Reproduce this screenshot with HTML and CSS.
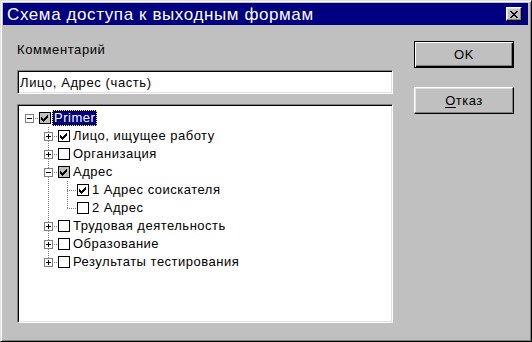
FILE: index.html
```html
<!DOCTYPE html>
<html lang="ru">
<head>
<meta charset="utf-8">
<title>Схема доступа к выходным формам</title>
<link rel="stylesheet" href="styles.css">
</head>
<body>
<svg class="defs" width="0" height="0" aria-hidden="true">
  <defs>
    <symbol id="chk" viewBox="0 0 7 7">
      <rect x="0" y="2" width="1" height="3"/>
      <rect x="1" y="3" width="1" height="3"/>
      <rect x="2" y="4" width="1" height="3"/>
      <rect x="3" y="3" width="1" height="3"/>
      <rect x="4" y="2" width="1" height="3"/>
      <rect x="5" y="1" width="1" height="3"/>
      <rect x="6" y="0" width="1" height="3"/>
    </symbol>
  </defs>
</svg>
<div class="window">
  <div class="titlebar">
    <span class="title">Схема доступа к выходным формам</span>
    <button class="close" aria-label="Закрыть">
      <svg width="8" height="7" viewBox="0 0 8 7">
        <rect x="0" y="0" width="2" height="1"/><rect x="6" y="0" width="2" height="1"/>
        <rect x="1" y="1" width="2" height="1"/><rect x="5" y="1" width="2" height="1"/>
        <rect x="2" y="2" width="4" height="1"/>
        <rect x="3" y="3" width="2" height="1"/>
        <rect x="2" y="4" width="4" height="1"/>
        <rect x="1" y="5" width="2" height="1"/><rect x="5" y="5" width="2" height="1"/>
        <rect x="0" y="6" width="2" height="1"/><rect x="6" y="6" width="2" height="1"/>
      </svg>
    </button>
  </div>
  <div class="content">
    <div class="left">
      <div class="caption">Комментарий</div>
      <div class="edit">Лицо, Адрес (часть)</div>
      <div class="tree">
        <div class="row">
          <span class="cell c-root"><span class="exp"></span></span>
          <span class="cb gray"><svg class="ck"><use href="#chk"/></svg></span>
          <span class="label selected">Primer</span>
        </div>
        <div class="row">
          <span class="cell"></span>
          <span class="cell c-tee"><span class="exp plus"></span></span>
          <span class="cb"><svg class="ck"><use href="#chk"/></svg></span>
          <span class="label">Лицо, ищущее работу</span>
        </div>
        <div class="row">
          <span class="cell"></span>
          <span class="cell c-tee"><span class="exp plus"></span></span>
          <span class="cb"></span>
          <span class="label">Организация</span>
        </div>
        <div class="row">
          <span class="cell"></span>
          <span class="cell c-tee"><span class="exp"></span></span>
          <span class="cb gray"><svg class="ck"><use href="#chk"/></svg></span>
          <span class="label">Адрес</span>
        </div>
        <div class="row">
          <span class="cell"></span>
          <span class="cell c-line"></span>
          <span class="cell c-tee"></span>
          <span class="cb"><svg class="ck"><use href="#chk"/></svg></span>
          <span class="label">1 Адрес соискателя</span>
        </div>
        <div class="row">
          <span class="cell"></span>
          <span class="cell c-line"></span>
          <span class="cell c-end"></span>
          <span class="cb"></span>
          <span class="label">2 Адрес</span>
        </div>
        <div class="row">
          <span class="cell"></span>
          <span class="cell c-tee"><span class="exp plus"></span></span>
          <span class="cb"></span>
          <span class="label">Трудовая деятельность</span>
        </div>
        <div class="row">
          <span class="cell"></span>
          <span class="cell c-tee"><span class="exp plus"></span></span>
          <span class="cb"></span>
          <span class="label">Образование</span>
        </div>
        <div class="row">
          <span class="cell"></span>
          <span class="cell c-end"><span class="exp plus"></span></span>
          <span class="cb"></span>
          <span class="label">Результаты тестирования</span>
        </div>
      </div>
    </div>
    <div class="right">
      <button class="btn default">OK</button>
      <button class="btn"><u>О</u>тказ</button>
    </div>
  </div>
</div>
</body>
</html>
```

FILE: styles.css
```css
html, body {
  margin: 0;
  padding: 0;
  background: #c0c0c0;
}

body {
  font-family: "Liberation Sans", Arial, sans-serif;
  font-size: 13px;
  color: #000;
}

.defs {
  position: absolute;
  width: 0;
  height: 0;
  overflow: hidden;
}

.window {
  width: 532px;
  height: 342px;
  box-sizing: border-box;
  background: #c0c0c0;
  border: 1px solid;
  border-color: #dfdfdf #000 #000 #dfdfdf;
  box-shadow: inset 1px 1px #fff, inset -1px -1px #808080;
  padding: 2px 3px 3px 2px;
  display: flex;
  flex-direction: column;
}

.titlebar {
  height: 22px;
  flex: none;
  background: #000080;
  color: #fff;
  display: flex;
  align-items: center;
  padding: 0 6px 0 4px;
}

.title {
  font-size: 17px;
  letter-spacing: 0.6px;
  line-height: 20px;
  padding-top: 2px;
  white-space: nowrap;
}

.close {
  margin-left: auto;
  width: 16px;
  height: 14px;
  padding: 0;
  box-sizing: border-box;
  background: #c0c0c0;
  border: 1px solid;
  border-color: #fff #000 #000 #fff;
  box-shadow: inset -1px -1px #808080, inset 1px 1px #dfdfdf;
  display: flex;
  align-items: center;
  justify-content: center;
}

.close svg {
  display: block;
  fill: #000;
  margin-left: -1px;
}

.content {
  flex: 1;
  display: flex;
  gap: 21px;
  padding: 16px 14px 0 14px;
}

.left {
  width: 376px;
  flex: none;
  display: flex;
  flex-direction: column;
  padding-top: 1px;
}

.caption {
  line-height: 16px;
  letter-spacing: 0.6px;
}

.edit {
  margin-top: 12px;
  height: 24px;
  box-sizing: border-box;
  background: #fff;
  border: 1px solid;
  border-color: #808080 #fff #fff #808080;
  box-shadow: inset 1px 1px #000, inset -1px -1px #dfdfdf;
  padding: 2px 0 0 2px;
  line-height: 19px;
  letter-spacing: 0.6px;
  white-space: nowrap;
}

.tree {
  margin-top: 10px;
  height: 219px;
  box-sizing: border-box;
  background: #fff;
  border: 1px solid;
  border-color: #808080 #fff #fff #808080;
  box-shadow: inset 1px 1px #000, inset -1px -1px #dfdfdf;
  padding: 4px 0 0 2px;
}

.row {
  height: 18px;
  display: flex;
  align-items: center;
}

.cell {
  width: 19px;
  height: 18px;
  flex: none;
  display: block;
}

.c-root {
  background: repeating-linear-gradient(to right, #808080 0 1px, transparent 1px 2px) 9px 9px / 10px 1px no-repeat;
}

.c-tee {
  background:
    repeating-linear-gradient(to right, #808080 0 1px, transparent 1px 2px) 9px 9px / 10px 1px no-repeat,
    repeating-linear-gradient(to bottom, #808080 0 1px, transparent 1px 2px) 9px 0 / 1px 18px no-repeat;
}

.c-end {
  background:
    repeating-linear-gradient(to right, #808080 0 1px, transparent 1px 2px) 9px 9px / 10px 1px no-repeat,
    repeating-linear-gradient(to bottom, #808080 0 1px, transparent 1px 2px) 9px 0 / 1px 10px no-repeat;
}

.c-line {
  background: repeating-linear-gradient(to bottom, #808080 0 1px, transparent 1px 2px) 9px 0 / 1px 18px no-repeat;
}

.exp {
  display: block;
  width: 9px;
  height: 9px;
  box-sizing: border-box;
  margin: 5px 0 0 5px;
  border: 1px solid #808080;
  background: linear-gradient(#000, #000) 1px 3px / 5px 1px no-repeat, #fff;
}

.exp.plus {
  background:
    linear-gradient(#000, #000) 1px 3px / 5px 1px no-repeat,
    linear-gradient(#000, #000) 3px 1px / 1px 5px no-repeat,
    #fff;
}

.cb {
  width: 12px;
  height: 12px;
  flex: none;
  box-sizing: border-box;
  border: 1px solid #000;
  background: #fff;
  display: block;
}

.cb.gray {
  background: #c0c0c0;
}

.ck {
  display: block;
  width: 7px;
  height: 7px;
  margin: 2px 0 0 1px;
  fill: #000;
}

.label {
  margin-left: 1px;
  border: 1px solid transparent;
  padding: 0 1px;
  line-height: 14px;
  letter-spacing: 0.5px;
  white-space: nowrap;
}

.label.selected {
  background: #000080;
  color: #fff;
  border: 1px dotted #ffff00;
}

.right {
  width: 100px;
  flex: none;
  display: flex;
  flex-direction: column;
  gap: 19px;
}

.btn {
  width: 100px;
  height: 27px;
  box-sizing: border-box;
  padding: 0;
  font-family: "Liberation Sans", Arial, sans-serif;
  font-size: 13px;
  letter-spacing: 0.5px;
  color: #000;
  background: #c0c0c0;
  border: 1px solid;
  border-color: #fff #000 #000 #fff;
  box-shadow: inset -1px -1px #808080, inset 1px 1px #dfdfdf;
}

.btn.default {
  border-color: #000;
  box-shadow: inset 1px 1px #fff, inset -1px -1px #000, inset -2px -2px #808080;
}

.btn u {
  text-decoration: underline;
  text-underline-offset: 2px;
}
```
